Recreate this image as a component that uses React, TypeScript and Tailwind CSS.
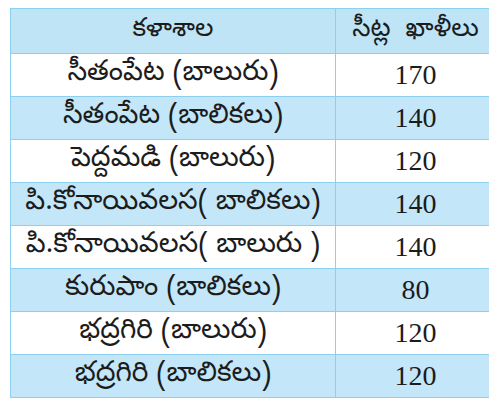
const ROWS = [
  { name: "సీతంపేట (బాలురు)", seats: "170" },
  { name: "సీతంపేట (బాలికలు)", seats: "140" },
  { name: "పెద్దమడి (బాలురు)", seats: "120" },
  { name: "పి.కోనాయివలస( బాలికలు)", seats: "140" },
  { name: "పి.కోనాయివలస( బాలురు )", seats: "140" },
  { name: "కురుపాం (బాలికలు)", seats: "80" },
  { name: "భద్రగిరి (బాలురు)", seats: "120" },
  { name: "భద్రగిరి (బాలికలు)", seats: "120" },
];

const telugu = "font-['Noto_Sans_Telugu','Noto_Sans','DejaVu_Sans',sans-serif]";

export default function App() {
  return (
    <main className="w-[489px] h-[400px] overflow-hidden bg-white pt-[8px] pl-[10px]">
      <table className="w-[485px] table-fixed border-collapse text-[#1c1c1c]">
        <colgroup>
          <col className="w-[325px]" />
          <col className="w-[160px]" />
        </colgroup>
        <thead>
          <tr className="h-[45px] bg-[#bfe4f6]">
            <th className={`border border-[#8ccfee] text-[26px] leading-none font-normal ${telugu}`}>కళాశాల</th>
            <th className={`border border-[#8ccfee] text-[26px] leading-none font-normal whitespace-pre ${telugu}`}>సీట్ల  ఖాళీలు</th>
          </tr>
        </thead>
        <tbody>
          {ROWS.map((row, i) => (
            <tr key={i} className={`h-[43px] ${i % 2 === 0 ? "bg-white" : "bg-[#c3e7f8]"}`}>
              <td className={`border border-[#8ccfee] text-center text-[28px] leading-none whitespace-nowrap ${telugu}`}>{row.name}</td>
              <td className="border border-[#8ccfee] text-center text-[28px] leading-none font-['Liberation_Serif',serif]">
                {row.seats}
              </td>
            </tr>
          ))}
        </tbody>
      </table>
    </main>
  );
}
